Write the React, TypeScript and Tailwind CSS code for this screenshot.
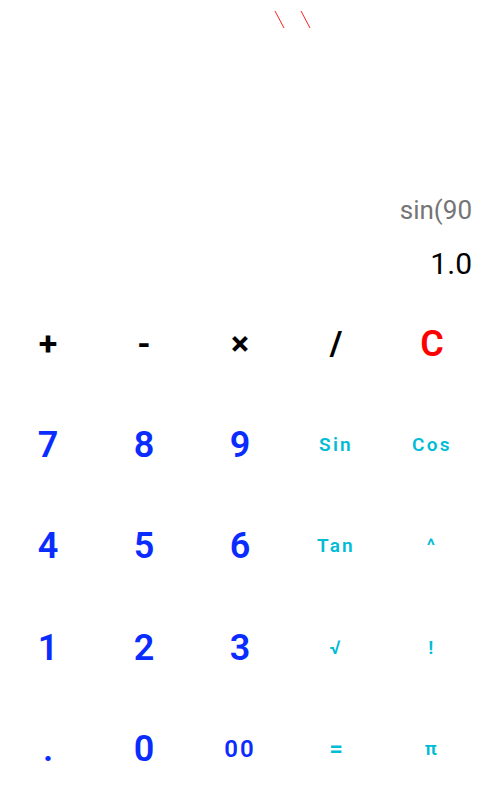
import React from 'react';

type Key = { label: string; kind: 'op' | 'clear' | 'num' | 'fn' | 'small' | 'eq' };

const keys: Key[] = [
  { label: '+', kind: 'op' },
  { label: '-', kind: 'op' },
  { label: '×', kind: 'op' },
  { label: '/', kind: 'op' },
  { label: 'C', kind: 'clear' },
  { label: '7', kind: 'num' },
  { label: '8', kind: 'num' },
  { label: '9', kind: 'num' },
  { label: 'Sin', kind: 'fn' },
  { label: 'Cos', kind: 'fn' },
  { label: '4', kind: 'num' },
  { label: '5', kind: 'num' },
  { label: '6', kind: 'num' },
  { label: 'Tan', kind: 'fn' },
  { label: '^', kind: 'fn' },
  { label: '1', kind: 'num' },
  { label: '2', kind: 'num' },
  { label: '3', kind: 'num' },
  { label: '√', kind: 'fn' },
  { label: '!', kind: 'fn' },
  { label: '.', kind: 'num' },
  { label: '0', kind: 'num' },
  { label: '00', kind: 'small' },
  { label: '=', kind: 'eq' },
  { label: 'π', kind: 'fn' },
];

const styles: Record<Key['kind'], string> = {
  op: 'text-[34px] font-bold text-black',
  clear: 'text-[36px] font-semibold text-[#ff0000]',
  num: 'text-[36px] font-semibold text-[#0a2cff]',
  small: 'text-[24px] font-semibold tracking-[0.08em] text-[#0a2cff]',
  fn: 'text-[19px] font-semibold tracking-[0.12em] text-[#00bcd4]',
  eq: 'text-[24px] font-semibold text-[#00bcd4]',
};

export default function App() {
  return (
    <div className="relative w-[480px] h-[800px] bg-white overflow-hidden font-['Roboto',sans-serif]">
      {/* stray red marks at top */}
      <svg className="absolute left-[270px] top-[8px]" width="50" height="24" viewBox="0 0 50 24">
        <line x1="5" y1="3" x2="14" y2="20" stroke="#ff2020" strokeWidth="1" />
        <line x1="31" y1="3" x2="40" y2="20" stroke="#ff2020" strokeWidth="1" />
      </svg>

      {/* Display */}
      <div className="h-[293px] flex flex-col items-end pr-2 pt-[192px]">
        <div className="text-[26px] leading-[36px] text-[#757575]">sin(90</div>
        <div className="text-[30px] leading-[36px] mt-[18px] text-black">1.0</div>
      </div>

      {/* Keypad */}
      <div className="grid grid-cols-5 auto-rows-[101.4px]">
        {keys.map((k, i) => (
          <button key={i} className={`flex items-center justify-center ${styles[k.kind]}`}>
            {k.label}
          </button>
        ))}
      </div>
    </div>
  );
}
